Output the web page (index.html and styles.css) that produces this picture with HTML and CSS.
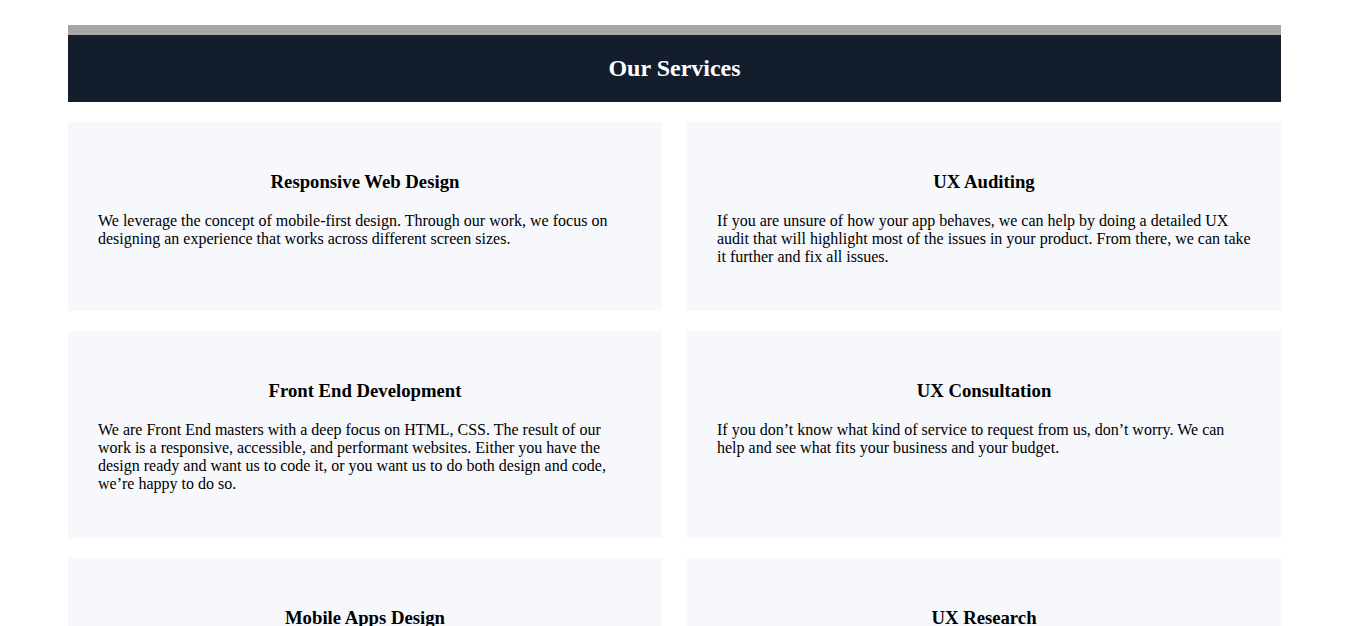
FILE: index.html
```html
<!DOCTYPE html>
<html lang="en">
<head>
<meta charset="utf-8">
<title>Our Services</title>
<link rel="stylesheet" href="styles.css">
</head>
<body>
<main class="services">
  <header class="services-header">
    <h2 class="services-title">Our Services</h2>
  </header>
  <section class="services-grid">
    <article class="card">
      <h3 class="card-title">Responsive Web Design</h3>
      <p class="card-text">We leverage the concept of mobile-first design. Through our work, we focus on designing an experience that works across different screen sizes.</p>
    </article>
    <article class="card">
      <h3 class="card-title">UX Auditing</h3>
      <p class="card-text">If you are unsure of how your app behaves, we can help by doing a detailed UX audit that will highlight most of the issues in your product. From there, we can take it further and fix all issues.</p>
    </article>
    <article class="card">
      <h3 class="card-title">Front End Development</h3>
      <p class="card-text">We are Front End masters with a deep focus on HTML, CSS. The result of our work is a responsive, accessible, and performant websites. Either you have the design ready and want us to code it, or you want us to do both design and code, we’re happy to do so.</p>
    </article>
    <article class="card">
      <h3 class="card-title">UX Consultation</h3>
      <p class="card-text">If you don’t know what kind of service to request from us, don’t worry. We can help and see what fits your business and your budget.</p>
    </article>
    <article class="card">
      <h3 class="card-title">Mobile Apps Design</h3>
      <p class="card-text">We design mobile apps that feel native on every platform, with a focus on clarity, speed and ease of use.</p>
    </article>
    <article class="card">
      <h3 class="card-title">UX Research</h3>
      <p class="card-text">We talk to your users and study how they work, so that every design decision is backed by real insight.</p>
    </article>
  </section>
</main>
</body>
</html>
```

FILE: styles.css
```css
html, body {
  margin: 0;
  padding: 0;
  background: #ffffff;
}

body {
  font-family: "Liberation Serif", "Times New Roman", serif;
  color: #000000;
}

.services {
  width: 1213px;
  margin: 25px 0 40px 68px;
}

.services-header {
  background: #141d2b;
  border-top: 10px solid #a6a6a6;
  padding: 20px 0;
  text-align: center;
}

.services-title {
  margin: 0;
  color: #ffffff;
  font-size: 24px;
  line-height: 27px;
  font-weight: bold;
}

.services-grid {
  display: grid;
  grid-template-columns: 1fr 1fr;
  column-gap: 25px;
  row-gap: 20px;
  margin-top: 20px;
}

.card {
  background: #f7f8fc;
  padding: 30px;
}

.card-title {
  font-size: 18.72px;
  line-height: 22px;
  margin: 19px 0 19px;
  text-align: center;
  font-weight: bold;
}

.card-text {
  font-size: 16px;
  line-height: 18px;
  margin: 0 0 15px;
}
```
